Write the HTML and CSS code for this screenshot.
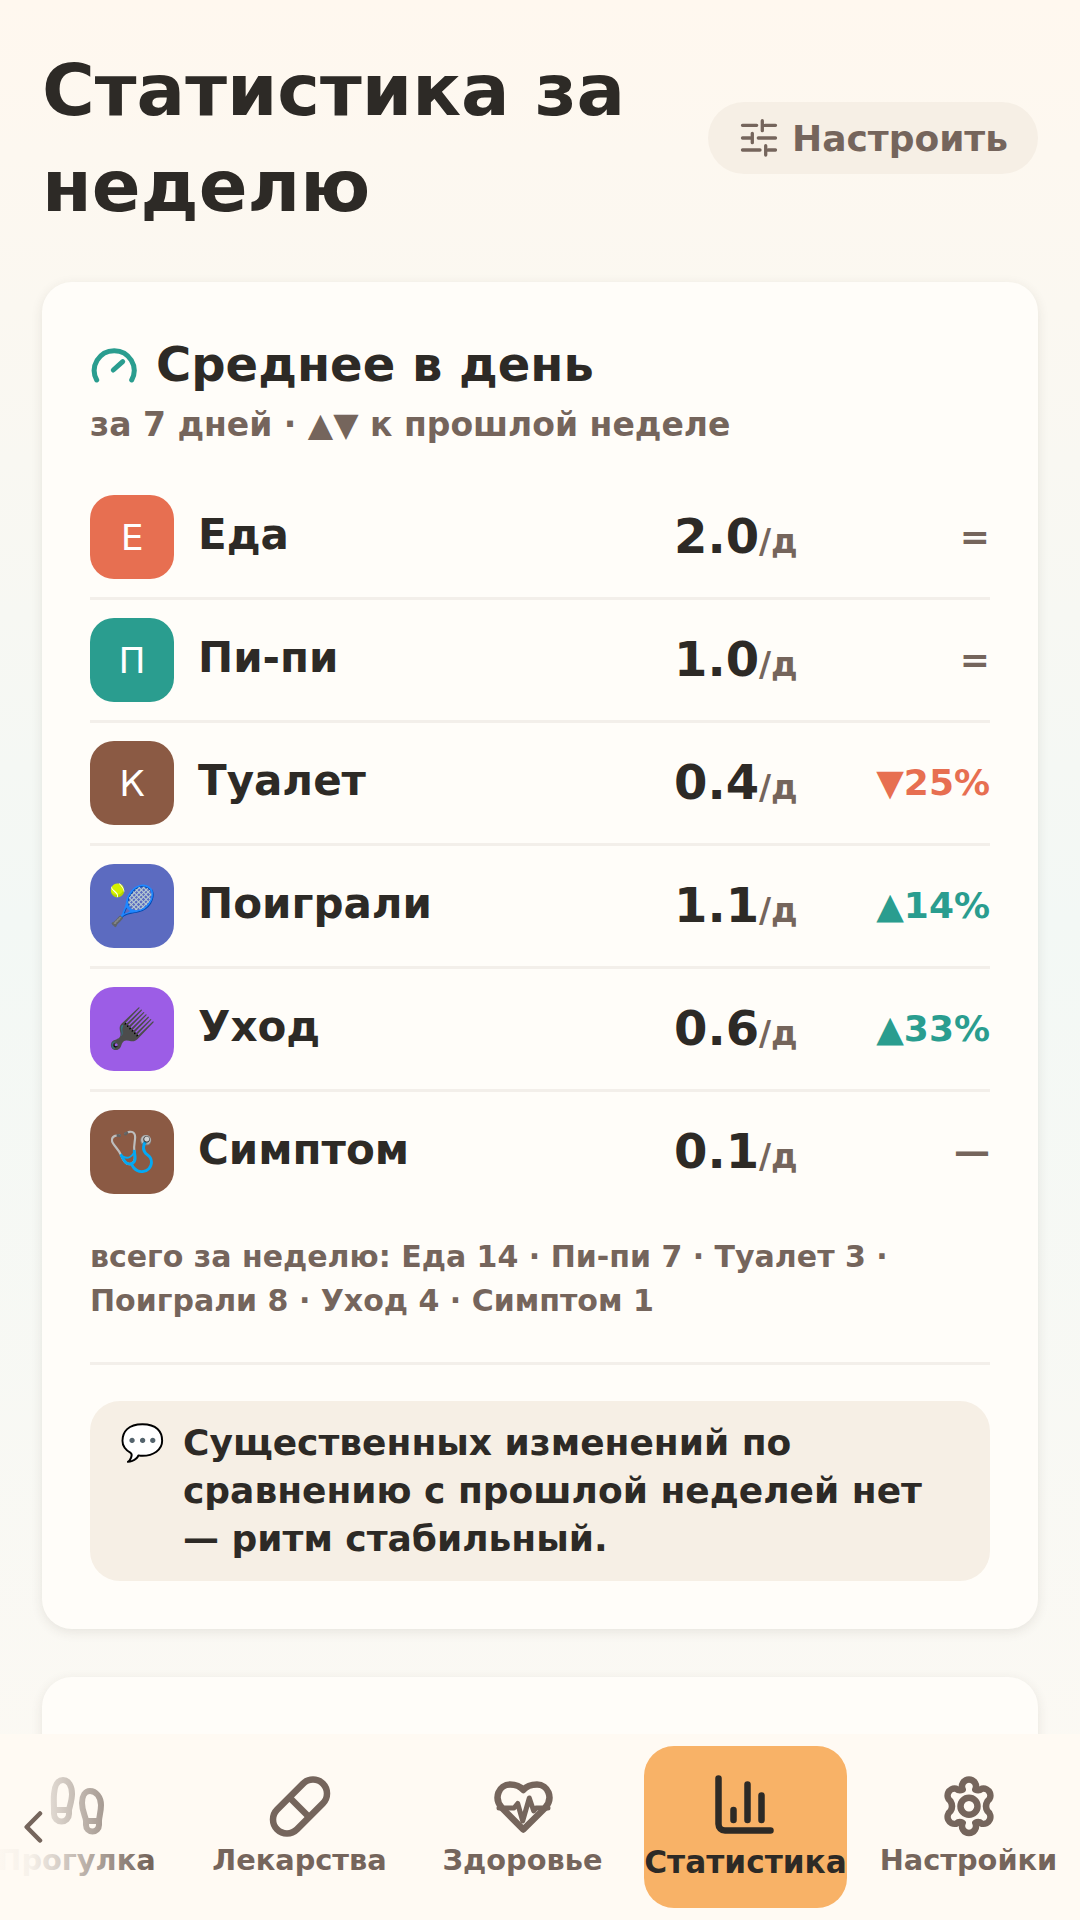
FILE: index.html
```html
<!DOCTYPE html>
<html lang="ru">
<head>
<meta charset="utf-8">
<title>Статистика за неделю</title>
<link rel="stylesheet" href="styles.css">
</head>
<body>
<main class="page">
  <header class="head">
    <h1 class="title">Статистика за неделю</h1>
    <button class="tune">
      <svg class="tune-ic" viewBox="0 0 42 42" fill="none" stroke="currentColor" stroke-width="3.300" stroke-linecap="round"><path d="M4.500 8.300H18.700M24.300 3.700V13.700M27 8.300H37.500M4.500 21H12M14.300 16.300V25.700M20.300 21H37.500M4.500 33H22M27.700 28.700V38M30.300 33H37.500"/></svg>
      <span>Настроить</span>
    </button>
  </header>

  <section class="card">
    <div class="card-head">
      <svg class="gauge" viewBox="0 0 48 48" fill="none" stroke="#2a9d8f" stroke-width="5" stroke-linecap="round"><path d="M6.700 40A19.900 19.900 0 1 1 41.700 40"/><path d="M23.300 30L32.700 21.700"/></svg>
      <h2 class="card-title">Среднее в день</h2>
    </div>
    <p class="card-sub">за 7 дней · ▲▼ к прошлой неделе</p>

    <ul class="rows">
      <li class="row"><span class="ic c-food">Е</span><span class="lbl">Еда</span><span class="val">2.0<small>/д</small></span><span class="delta flat">=</span></li>
      <li class="row"><span class="ic c-pee">П</span><span class="lbl">Пи-пи</span><span class="val">1.0<small>/д</small></span><span class="delta flat">=</span></li>
      <li class="row"><span class="ic c-brown">К</span><span class="lbl">Туалет</span><span class="val">0.4<small>/д</small></span><span class="delta down">▼25%</span></li>
      <li class="row"><span class="ic c-play emoji">🎾</span><span class="lbl">Поиграли</span><span class="val">1.1<small>/д</small></span><span class="delta up">▲14%</span></li>
      <li class="row"><span class="ic c-care emoji">🪮</span><span class="lbl">Уход</span><span class="val">0.6<small>/д</small></span><span class="delta up">▲33%</span></li>
      <li class="row"><span class="ic c-brown emoji">🩺</span><span class="lbl">Симптом</span><span class="val">0.1<small>/д</small></span><span class="delta flat">—</span></li>
    </ul>

    <p class="total">всего за неделю: Еда 14 · Пи-пи 7 · Туалет 3 · Поиграли 8 · Уход 4 · Симптом 1</p>

    <div class="insight">
      <span class="insight-ic">💬</span>
      <p class="insight-text">Существенных изменений по сравнению с прошлой неделей нет — ритм стабильный.</p>
    </div>
  </section>

  <section class="card card-next"></section>
</main>

<nav class="nav">
  <div class="nav-item">
    <svg class="nav-ic" viewBox="0 0 72 72" fill="none" stroke="currentColor" stroke-width="6" stroke-linejoin="round"><path d="M22 10C27.500 10 31 16 31 24C31 30 29 35 28 40V44A7.500 7.500 0 0 1 13 44V40C13 35 12.500 30 13 24C13.500 16 16.500 10 22 10ZM13 40H28"/><path d="M49 21C55 21 60 27 60 35C60 42 58 47 58 51V55A6.500 6.500 0 0 1 45 55V51C45 47 41 42 41 33C41 26 44 21 49 21ZM45 51H58"/></svg>
    <span>Прогулка</span>
  </div>
  <div class="nav-item">
    <svg class="nav-ic" viewBox="0 0 72 72" fill="none" stroke="currentColor" stroke-width="6.500" stroke-linejoin="round"><path d="M39.100 13.600A14 14 0 0 1 58.900 33.400L32.900 59.400A14 14 0 0 1 13.100 39.600Z"/><path d="M25 27L46 48"/></svg>
    <span>Лекарства</span>
  </div>
  <div class="nav-item">
    <svg class="nav-ic" viewBox="0 0 72 72" fill="none" stroke="currentColor" stroke-width="6.500" stroke-linejoin="round" stroke-linecap="round"><path d="M36.300 59.500L15 38C6 28 12 14.500 23 14.500C29 14.500 33 16 36.300 20C39.600 16 44 14.500 50 14.500C61 14.500 67 28 58 38Z"/><path d="M12 38H27L30.700 33.500L35.700 51L42.300 28L46.700 41L49 38H61" stroke-width="5"/></svg>
    <span>Здоровье</span>
  </div>
  <div class="nav-item active">
    <svg class="nav-ic" viewBox="0 0 72 72" fill="none" stroke="currentColor" stroke-width="6.500" stroke-linecap="round"><path d="M8.500 8.500V54A6.500 6.500 0 0 0 15 60.500H60.500"/><path d="M23.500 40V50M37.500 14.500V50M51.500 25.500V50"/></svg>
    <span>Статистика</span>
  </div>
  <div class="nav-item">
    <svg class="nav-ic" viewBox="0 0 72 72" fill="none" stroke="currentColor" stroke-width="6.500" stroke-linejoin="round"><circle cx="36" cy="36.200" r="8.500"/><path d="M29.700 19.500A7 7 0 1 1 42.300 19.500Q45.800 21.300 48.900 18.700A7 7 0 0 1 54.500 31.200Q51.500 36.200 54.500 41.200A7 7 0 0 1 48.900 53.700Q45.800 51.100 42.300 52.900A7 7 0 1 1 29.700 52.900Q26.200 51.100 23.100 53.700A7 7 0 0 1 17.500 41.200Q20.500 36.200 17.500 31.200A7 7 0 0 1 23.100 18.700Q26.200 21.300 29.700 19.500Z"/></svg>
    <span>Настройки</span>
  </div>
  <div class="fade"></div>
  <svg class="chev" viewBox="0 0 22 36" fill="none" stroke="currentColor" stroke-width="4.500" stroke-linecap="round" stroke-linejoin="round"><path d="M18 2.500L4.700 16L18 29.500"/></svg>
</nav>
</body>
</html>
```
FILE: styles.css
```css
* { box-sizing: border-box; }
html, body { margin: 0; padding: 0; }
body {
  height: 1920px;
  overflow: hidden;
  position: relative;
  font-family: "DejaVu Sans", sans-serif;
  color: #2d2a26;
  background: linear-gradient(180deg, #fff8ef 0%, #f3f8f5 48%, #fdf9f3 100%);
}
.page { padding: 42px 42px 0; }
.head { display: flex; align-items: center; justify-content: space-between; }
.title { margin: 0; width: 620px; font-size: 72px; line-height: 96px; font-weight: 700; }
.tune {
  display: flex; align-items: center; gap: 12px;
  height: 72px; padding: 0 30px;
  border: 0; border-radius: 36px;
  background: #f6efe5; color: #75655c;
  font: 700 36px "DejaVu Sans", sans-serif;
}
.tune-ic { width: 42px; height: 42px; }
.card {
  margin-top: 48px;
  padding: 48px;
  border-radius: 30px;
  background: #fffdf9;
  box-shadow: 0 3px 12px rgba(60, 50, 40, .1);
}
.card-next { height: 400px; }
.card-head { display: flex; align-items: center; gap: 18px; margin-bottom: 3px; }
.gauge { width: 48px; height: 48px; flex: none; }
.card-title { margin: 0; font-size: 48px; line-height: 68px; font-weight: 700; }
.card-sub { margin: 0 0 28px; font-size: 33px; line-height: 48px; font-weight: 700; color: #75655c; }
.rows { list-style: none; margin: 0; padding: 0; }
.row {
  display: flex; align-items: center; gap: 24px;
  padding: 18px 0;
  border-bottom: 3px solid #f3efea;
}
.row:last-child { border-bottom: 0; }
.ic {
  flex: none; width: 84px; height: 84px; border-radius: 24px;
  display: flex; align-items: center; justify-content: center;
  color: #fff; font-size: 36px; font-weight: 400;
}
.emoji { font-size: 39px; }
.c-food { background: #e76f51; }
.c-pee { background: #2a9d8f; }
.c-brown { background: #8b5a44; }
.c-play { background: #5c6bc0; }
.c-care { background: #9c5de6; }
.lbl { flex: 1; font-size: 42px; font-weight: 700; padding-bottom: 5px; }
.val { width: 172px; font-size: 48px; font-weight: 700; white-space: nowrap; padding-bottom: 2px; }
.val small { font-size: 33px; color: #75655c; }
.delta { width: 120px; text-align: right; font-size: 36px; font-weight: 700; white-space: nowrap; padding-bottom: 2px; }
.flat { color: #75655c; }
.down { color: #e76f51; }
.up { color: #2a9d8f; }
.total {
  margin: 23px 0 0; padding-bottom: 39px;
  border-bottom: 3px solid #f3efea;
  font-size: 30px; line-height: 44px; font-weight: 700; color: #75655c;
}
.insight {
  display: flex; gap: 18px;
  margin-top: 36px; padding: 18px 30px;
  border-radius: 30px; background: #f6efe5;
}
.insight-ic { font-size: 36px; line-height: 48px; }
.insight-text { margin: 0; font-size: 36px; line-height: 48px; font-weight: 700; }
.nav {
  position: absolute; left: 0; right: 0; bottom: 0;
  height: 186px;
  display: flex; align-items: center; gap: 20px;
  background: #fffaf3;
  color: #75655c;
}
.nav-item {
  flex: none;
  width: 203px; height: 162px;
  display: flex; flex-direction: column; align-items: center;
  padding-top: 24px;
  border-radius: 30px;
  font-size: 28.8px; line-height: 36px; font-weight: 700; white-space: nowrap;
}
.nav-item:first-child { margin-left: -25px; }
.nav-ic { width: 72px; height: 72px; flex: none; }
.active { background: #f8b267; color: #2d2a26; font-size: 31.2px; line-height: 41px; }
.fade {
  position: absolute; left: 0; top: 0; bottom: 0; width: 150px;
  background: linear-gradient(90deg, rgba(255, 250, 243, .98) 0, rgba(255, 250, 243, .94) 30px, rgba(255, 250, 243, 0) 150px);
}
.chev { position: absolute; left: 22px; top: 77px; width: 22px; height: 36px; color: #75655c; }
```
